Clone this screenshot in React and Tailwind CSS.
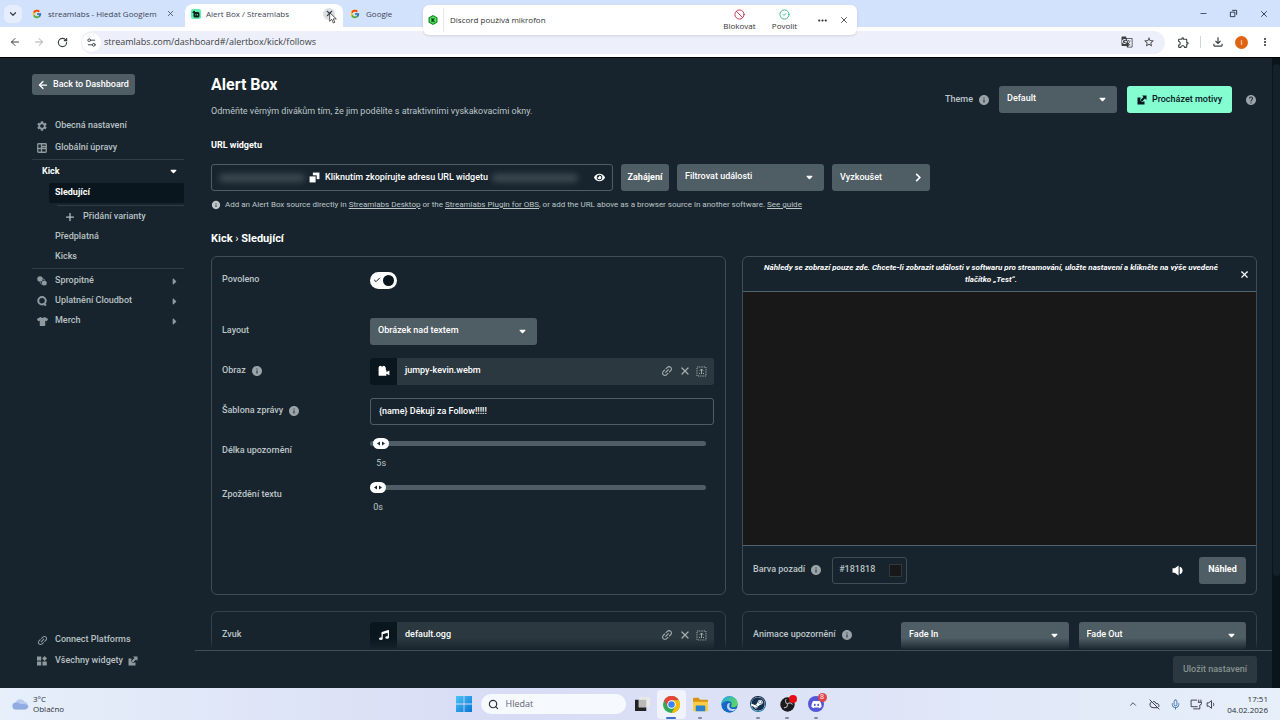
import React, { useState } from "react";
import { ArrowLeft, ArrowRight, RotateCw, Settings2, X, ChevronDown, ChevronUp, Check, Plus, Ban, CircleCheck, Search, Minus, Mic, CloudOff } from "lucide-react";
import { FcGoogle } from "react-icons/fc";
import { FaSteam, FaDiscord, FaTshirt, FaMusic, FaEye } from "react-icons/fa";
import { MdInfo, MdHelp, MdSettings, MdLink, MdGTranslate, MdStarBorder, MdOutlineExtension, MdOutlineFileDownload, MdMoreVert, MdMoreHoriz } from "react-icons/md";

/* ---------- icons ---------- */

const CaretDown = ({ className = "" }) => (
  <svg viewBox="0 0 8 6" className={`h-[5px] w-[7px] shrink-0 ${className}`} fill="currentColor">
    <path d="M1.2.8h5.6c.7 0 1 .8.5 1.2L4.7 4.8a1 1 0 0 1-1.4 0L.7 2C.2 1.600.5.8 1.200.8z" />
  </svg>
);

const CaretRight = () => (
  <svg viewBox="0 0 6 8" className="h-[7px] w-[5px] shrink-0" fill="currentColor">
    <path d="M.8 1.200v5.600c0 .7.8 1 1.200.5L4.800 4.700a1 1 0 0 0 0-1.400L2 .7C1.600.2.8.5.8 1.200z" />
  </svg>
);

const External = ({ className = "" }) => (
  <svg viewBox="0 0 20 20" className={`size-[10px] shrink-0 ${className}`} fill="currentColor">
    <path d="M1 5h6v3.500L5.500 10l4.500 4.500 1.500-1.500H15v6H1z" />
    <path d="M10 1h9v9l-3-3-6.500 6.500-3-3L13 4z" />
  </svg>
);

const Grid = () => (
  <svg viewBox="0 0 20 20" className="size-[10px]" fill="none" stroke="currentColor" strokeWidth="2.600">
    <rect x="1.500" y="1.500" width="17" height="17" rx="1.500" />
    <path d="M9 1.500v17M1.500 11h17M9 7h9" />
  </svg>
);

const Coins = () => (
  <svg viewBox="0 0 20 20" className="size-[10px]" fill="currentColor">
    <circle cx="6" cy="6" r="5.500" />
    <circle cx="14.500" cy="14" r="5" />
    <path d="M6 12l3 5M11 5l5 3" stroke="currentColor" strokeWidth="1.500" />
  </svg>
);

const Bot = () => (
  <svg viewBox="0 0 20 20" className="size-[10px]" fill="none" stroke="currentColor" strokeWidth="4">
    <circle cx="10" cy="9.500" r="7.500" />
    <path d="M12 15l6 4" />
  </svg>
);

const Widgets = () => (
  <svg viewBox="0 0 20 20" className="size-[10px]" fill="currentColor">
    <path d="M0 1h8.500v8H0zM0 11h8.500v8H0zM11 11h8.500v8H11z" />
    <path d="M15.200 0l2.400 2.400L20 5l-2.400 2.500L15.200 10l-2.500-2.500L10.500 5l2.200-2.600z" />
  </svg>
);

const Camera = () => (
  <svg viewBox="0 0 20 20" className="size-3" fill="currentColor">
    <circle cx="4" cy="4" r="2.800" />
    <circle cx="9.500" cy="4" r="2.800" />
    <path d="M1 8h12c.6 0 1 .4 1 1v2.500l5-2.500v8l-5-2.500V17c0 .6-.4 1-1 1H2c-.6 0-1-.4-1-1z" />
    <path d="M1 4h12v5H1z" />
  </svg>
);

const Copy = () => (
  <svg viewBox="0 0 20 20" className="size-[11px]">
    <path d="M7 1h12v12H7z" fill="#fff" />
    <path d="M0 6h14v14H0z" fill="#17242d" />
    <path d="M1 8h11v11H1z" fill="#fff" />
  </svg>
);

const Capture = () => (
  <svg viewBox="0 0 22 22" className="size-[11px]" fill="none" stroke="currentColor" strokeWidth="2">
    <rect x="2" y="2" width="18" height="18" strokeDasharray="2.500 2" />
    <path d="M11 6v10M7.500 9.500L11 6l3.500 3.500" />
    <path d="M7 14v2M15 14v2" />
  </svg>
);

const Speaker = () => (
  <svg viewBox="0 0 20 20" className="size-[11px]" fill="currentColor">
    <path d="M1 6h4l7-5v18l-7-5H1z" />
    <path d="M14 3c7 2 7 12 0 14z" />
  </svg>
);

const StreamlabsLogo = () => (
  <svg viewBox="0 0 20 20" className="size-[10px] shrink-0">
    <rect width="20" height="20" rx="4" fill="#5ff0b2" />
    <path d="M3 8c0-3 2-4.500 5-4.500V6h6a3 3 0 0 1 3 3v5a3 3 0 0 1-3 3H8a3 3 0 0 1-3-3V8z" fill="#10231f" />
    <path d="M9.500 10v3M13 10v3" stroke="#5ff0b2" strokeWidth="1.600" />
  </svg>
);

const HexLogo = () => (
  <svg viewBox="0 0 20 20" className="size-[10px]">
    <path d="M10 0l9 5v10l-9 5-9-5V5z" fill="#128a24" />
    <path d="M10 2.500l6.500 3.700v7.600L10 17.500l-6.500-3.700V6.200z" fill="#5bea63" />
    <path d="M8 5.500v9M13 7l-4 3 4 4" stroke="#083c10" strokeWidth="2.200" fill="none" />
  </svg>
);

const ChromeLogo = () => (
  <svg viewBox="0 0 24 24" className="size-[17px]">
    <circle cx="12" cy="12" r="12" fill="#34a853" />
    <path d="M12 0a12 12 0 0 1 10.400 6H12L6.800 15 1.600 6A12 12 0 0 1 12 0z" fill="#ea4335" />
    <path d="M22.400 6A12 12 0 0 1 12 24l5.200-9L12 6z" fill="#fbbc05" />
    <circle cx="12" cy="12" r="6" fill="#fff" />
    <circle cx="12" cy="12" r="4.600" fill="#3b82f6" />
  </svg>
);

const EdgeLogo = () => (
  <svg viewBox="0 0 24 24" className="size-[17px]">
    <defs>
      <linearGradient id="edgeTop" x1="0" x2="1" y1="0" y2="0.600">
        <stop offset="0" stopColor="#1fa7e8" />
        <stop offset="1" stopColor="#5fd85f" />
      </linearGradient>
    </defs>
    <circle cx="12" cy="12" r="11.500" fill="#1668c4" />
    <path d="M.5 12C.5 5 6 .5 12 .5S23.500 5 23.500 10c0 4-3 6-6 6-2.500 0-4-1-3-2.500 2-4-1-6.500-5-6.500S2 9 .5 12z" fill="url(#edgeTop)" />
    <path d="M9 12c-2 5 2 10 8 9 2.500-.5 4-2 5-3.500-4 2-10 1-10.500-3.500 0-1.500 1-2.500 2-3-1.500-1-3.800-.8-4.500 1z" fill="#dcebfb" opacity=".85" />
  </svg>
);

const FolderLogo = () => (
  <svg viewBox="0 0 24 22" className="h-[15px] w-[17px]">
    <path d="M1 2.500C1 1.500 1.700 1 2.500 1H9l2.500 3h10c.8 0 1.500.6 1.500 1.500V10H1z" fill="#d9930f" />
    <path d="M1 7h22v12.500c0 .8-.7 1.500-1.500 1.500h-19C1.700 21 1 20.300 1 19.500z" fill="#fccb46" />
    <path d="M5 14c0-1 .7-1.500 1.500-1.500h11c.8 0 1.500.5 1.500 1.500v7H5z" fill="#2583cf" />
  </svg>
);

const ObsLogo = () => (
  <svg viewBox="0 0 24 24" className="size-[15px]">
    <circle cx="12" cy="12" r="11.500" fill="#1b1b1d" />
    <g fill="none" stroke="#a9a9ad" strokeWidth="1.800" strokeLinecap="round">
      <path d="M12 11C9 10 8 7 9.500 4" />
      <path d="M12 11c2-2.500 5-3 7.500-.5" transform="rotate(8 12 12)" />
      <path d="M12 11c.5 3.500-1.500 6-5 6" />
    </g>
  </svg>
);

const WindowsLogo = () => (
  <svg viewBox="0 0 16 16" className="size-4">
    <defs>
      <linearGradient id="win" x1="0" x2="1" y1="0" y2="1">
        <stop offset="0" stopColor="#4cc4f5" />
        <stop offset="1" stopColor="#0a74d4" />
      </linearGradient>
    </defs>
    <path d="M0 0h7.600v7.600H0zM8.400 0H16v7.600H8.400zM0 8.400h7.600V16H0zM8.400 8.400H16V16H8.400z" fill="url(#win)" />
  </svg>
);

const Cloud = () => (
  <svg viewBox="0 0 34 24" className="h-3 w-[17px]">
    <path d="M8 23a7 7 0 0 1-.5-14A9.500 9.500 0 0 1 25 7.500 8 8 0 0 1 26 23z" fill="#b6cbee" />
    <path d="M8 23a7 7 0 0 1-1-13.900c6-1 9 4 14 3 5-.8 9 1 12 4A8 8 0 0 1 26 23z" fill="#8fabdf" />
  </svg>
);

/* ---------- controls ---------- */

const Info = () => <MdInfo className="size-3 shrink-0 text-[#9aa3a7]" />;

function Select({ label, value, options = [], className = "" }) {
  return (
    <span className={`relative flex h-[27px] items-center ${className}`}>
      <select
        aria-label={label}
        defaultValue={value}
        className="size-full appearance-none rounded-[3px] bg-[#4f5e65] pr-6 pb-px pl-2 font-medium text-white"
      >
        {[value, ...options].map((o) => (
          <option key={o}>{o}</option>
        ))}
      </select>
      <CaretDown className="pointer-events-none absolute right-[11px] text-white" />
    </span>
  );
}

function Row({ label, htmlFor, info, children }) {
  return (
    <div className="flex h-10 items-center">
      <div className="flex w-[148px] shrink-0 items-center gap-[5px]">
        <label htmlFor={htmlFor} className="font-medium">{label}</label>
        {info && <Info />}
      </div>
      {children}
    </div>
  );
}

function FileField({ icon, name }) {
  return (
    <div className="flex h-[27px] flex-1 items-center overflow-hidden rounded-[3px] bg-[#2b383f]">
      <span className="flex h-full w-[27px] items-center justify-center bg-[#09161d] text-white">{icon}</span>
      <span className="flex-1 pl-2 font-medium text-white">{name}</span>
      <span className="flex items-center gap-[5px] pr-[7px] text-[#a3acb0]">
        <button aria-label="Odkaz"><MdLink className="size-[14px] -rotate-45" /></button>
        <button aria-label="Odebrat"><X className="size-3" strokeWidth={2.500} /></button>
        <button aria-label="Vybrat"><Capture /></button>
      </span>
    </div>
  );
}

function RangeField({ id, min, max, initial }) {
  const [value, setValue] = useState(initial);
  const ratio = (value - min) / (max - min);
  const left = `calc((100% - 16px) * ${ratio})`;
  return (
    <div className="flex-1 pr-2">
      <div className="relative flex h-5 items-center">
        <input
          id={id}
          type="range"
          min={min}
          max={max}
          value={value}
          onChange={(e) => setValue(Number(e.target.value))}
          className="h-[5px] w-full appearance-none rounded-full bg-[#4f5e65] [&::-webkit-slider-thumb]:h-[11px] [&::-webkit-slider-thumb]:w-4 [&::-webkit-slider-thumb]:appearance-none [&::-webkit-slider-thumb]:rounded-full [&::-webkit-slider-thumb]:bg-white"
        />
        <svg viewBox="0 0 16 11" className="pointer-events-none absolute h-[11px] w-4" style={{ left }} fill="#17242d">
          <path d="M7 3.500v4L4 5.500zM9 3.500v4l3-2z" />
        </svg>
      </div>
      <div className="relative h-4 leading-5">
        <span className="absolute flex w-4 justify-center" style={{ left }}>{value}s</span>
      </div>
    </div>
  );
}

/* ---------- browser frame ---------- */

function TabStrip() {
  return (
    <div className="flex h-[27px] items-center bg-[#d3e2fc] text-[8px] text-[#3c4454]">
      <button aria-label="Hledat karty" className="ml-1 flex size-[18px] items-center justify-center rounded-md bg-[#e6eefd]">
        <ChevronDown className="size-2.5" strokeWidth={3} />
      </button>
      <div className="ml-[10px] flex w-[153px] items-center">
        <FcGoogle className="size-[10px] shrink-0" />
        <span className="ml-1.5 flex-1 whitespace-nowrap">streamlabs - Hledat Googlem</span>
        <button aria-label="Zavřít kartu" className="mr-[10px]"><X className="size-[9px]" /></button>
      </div>
      <div className="flex h-[23px] w-[158px] items-center self-end rounded-t-lg bg-white pr-2 pb-1 pl-[6px]">
        <StreamlabsLogo />
        <span className="ml-[5px] flex-1 whitespace-nowrap">Alert Box / Streamlabs</span>
        <button aria-label="Zavřít kartu" className="relative flex size-3 items-center justify-center rounded-full bg-[#dcdfe3]">
          <X className="size-[9px]" strokeWidth={3} />
          <svg viewBox="0 0 12 18" className="pointer-events-none absolute top-1 left-1.5 h-3 w-2">
            <path d="M1 1v13l3.200-3 2.300 5.500 2.200-1L6.500 10.300H11z" fill="#fff" stroke="#111" />
          </svg>
        </button>
      </div>
      <div className="flex items-center gap-1.5 pl-[7px]">
        <FcGoogle className="size-[10px]" />
        <span>Google</span>
      </div>
      <div className="ml-auto flex items-center gap-[21px] pr-[11px] text-[#1f2937]">
        <button aria-label="Minimalizovat"><Minus className="size-[9px]" /></button>
        <button aria-label="Obnovit">
          <svg viewBox="0 0 10 10" className="size-[9px]" fill="none" stroke="currentColor"><path d="M1.500 3.500h5v5h-5zM3.500 1.500h5v5" /></svg>
        </button>
        <button aria-label="Zavřít"><X className="size-[10px]" /></button>
      </div>
    </div>
  );
}

function Toolbar() {
  return (
    <div className="flex h-[31px] items-center border-b border-black bg-white text-[#3c4043]">
      <button aria-label="Zpět" className="ml-[9px]"><ArrowLeft className="size-3" /></button>
      <button aria-label="Vpřed" className="ml-3 text-[#a8abaf]"><ArrowRight className="size-3" /></button>
      <button aria-label="Načíst znovu" className="ml-3"><RotateCw className="size-[11px]" strokeWidth={2.500} /></button>
      <div className="ml-[13px] flex h-[23px] flex-1 items-center rounded-full bg-[#edf0fa]">
        <span className="ml-px flex size-[19px] items-center justify-center rounded-full bg-white"><Settings2 className="size-[11px]" /></span>
        <input aria-label="Adresa" defaultValue="streamlabs.com/dashboard#/alertbox/kick/follows" className="ml-[3px] flex-1 bg-transparent text-[9px] outline-none" />
        <MdGTranslate className="size-3" />
        <MdStarBorder className="mx-[10px] size-3" />
      </div>
      <MdOutlineExtension className="ml-3 size-[13px]" />
      <span className="ml-2.5 h-3 w-px bg-[#d0d5df]" />
      <MdOutlineFileDownload className="ml-2.5 size-[14px]" />
      <span className="ml-[10px] flex size-[13px] items-center justify-center rounded-full bg-[#e0640f] text-[8px] text-white">i</span>
      <MdMoreVert className="mr-[9px] ml-[11px] size-3" />
    </div>
  );
}

function MicNotice() {
  return (
    <div className="absolute top-[5px] left-[423px] flex h-[30px] w-[434px] items-center rounded-md bg-white text-[8px] text-[#333] shadow-sm">
      <span className="flex h-6 w-[21px] items-center justify-center border-r border-[#e8e8e8]"><HexLogo /></span>
      <span className="ml-1.5 flex-1">Discord používá mikrofon</span>
      <button className="flex w-[45px] flex-col items-center leading-[11px]"><Ban className="size-[11px] text-[#c2304b]" />Blokovat</button>
      <button className="flex w-[45px] flex-col items-center leading-[11px]"><CircleCheck className="size-[11px] text-[#35b58a]" />Povolit</button>
      <button aria-label="Další" className="ml-[9px]"><MdMoreHoriz className="size-[13px]" /></button>
      <button aria-label="Zavřít" className="mr-2 ml-[10px]"><X className="size-[10px]" /></button>
    </div>
  );
}

/* ---------- sidebar ---------- */

function NavItem({ icon, children, arrow, className = "h-5" }) {
  return (
    <a href="#" className={`flex items-center ${className}`}>
      <span className="ml-1 flex w-[19px] shrink-0 text-[#8f999e]">
        <span className="flex size-3 items-center justify-center">{icon}</span>
      </span>
      <span className="flex flex-1 items-center gap-[5px]">{children}</span>
      {arrow && <span className="mr-[7px] text-[#8f999e]"><CaretRight /></span>}
    </a>
  );
}

function Sidebar() {
  return (
    <nav className="flex w-[195px] shrink-0 flex-col pt-4 pr-[11px] pb-[17px] pl-8 font-medium text-[#b9c1c4]">
      <button className="flex h-[21px] items-center gap-1 self-start rounded-[3px] bg-[#4f5e65] pr-1.5 pl-[5px] text-white">
        <ArrowLeft className="size-3" strokeWidth={2.500} />
        Back to Dashboard
      </button>
      <div className="mt-5 border-b border-[#2f3d45]">
        <NavItem className="h-[22px]" icon={<MdSettings className="size-3 shrink-0" />}>Obecná nastavení</NavItem>
        <NavItem className="h-[22px]" icon={<Grid />}>Globální úpravy</NavItem>
      </div>
      <div className="border-b border-[#2f3d45] pb-px">
        <button className="flex h-[23px] w-full items-center justify-between pr-[7px] pl-[10px] font-bold text-white">
          Kick
          <CaretDown />
        </button>
        <a href="#" className="ml-[17px] flex h-5 items-center rounded-[2px] bg-[#09161d] pl-1.5 font-bold text-white">Sledující</a>
        <a href="#" className="mt-0.5 ml-[25px] flex h-[22px] items-center gap-[7px] border-t border-[#2f3d45] pl-[7px]">
          <Plus className="size-3" strokeWidth={2.500} />
          Přidání varianty
        </a>
        <a href="#" className="ml-[23px] flex h-5 items-center">Předplatná</a>
        <a href="#" className="ml-[23px] flex h-5 items-center">Kicks</a>
      </div>
      <div className="mt-0.5">
        <NavItem icon={<Coins />} arrow>Spropitné</NavItem>
        <NavItem icon={<Bot />} arrow>Uplatnění Cloudbot</NavItem>
        <NavItem icon={<FaTshirt className="size-[11px]" />} arrow>Merch</NavItem>
      </div>
      <div className="mt-auto flex flex-col gap-px">
        <NavItem icon={<MdLink className="size-[13px] shrink-0 -rotate-45" />}>Connect Platforms</NavItem>
        <NavItem icon={<Widgets />}>Všechny widgety <External className="text-[#8f999e]" /></NavItem>
      </div>
    </nav>
  );
}

/* ---------- main area ---------- */

function PageHeader() {
  return (
    <header className="flex justify-between">
      <div>
        <h1 className="text-[16px] leading-5 font-bold text-white">Alert Box</h1>
        <p className="mt-2 leading-4">Odměňte věrným divákům tím, že jim podělíte s atraktivními vyskakovacími okny.</p>
      </div>
      <div className="mt-[11px] flex h-[27px] items-center">
        <span className="mr-[5px] font-medium">Theme</span>
        <Info />
        <Select label="Theme" value="Default" className="mr-[10px] ml-[9px] w-[118px]" />
        <button className="flex h-full w-[105px] items-center justify-center gap-[5px] rounded-[3px] bg-[#84fdd0] font-medium text-[#09161d]">
          <External />
          Procházet motivy
        </button>
        <button aria-label="Nápověda" className="ml-[13px]"><MdHelp className="size-3 text-[#9aa3a7]" /></button>
      </div>
    </header>
  );
}

function UrlBar() {
  return (
    <section>
      <h2 className="mt-[18px] leading-4 font-bold text-white">URL widgetu</h2>
      <div className="mt-[11px] flex gap-2 text-white">
        <div className="flex h-[27px] w-[402px] items-center rounded-[3px] border border-[#4f5e65] px-[7px]">
          <span className="h-2 flex-1 rounded bg-[#56646b] opacity-60 blur-[3px]" />
          <button className="flex items-center gap-[5px] px-1 font-medium"><Copy />Kliknutím zkopírujte adresu URL widgetu</button>
          <span className="h-2 flex-1 rounded bg-[#56646b] opacity-60 blur-[3px]" />
          <button aria-label="Zobrazit" className="ml-4"><FaEye className="size-[11px]" /></button>
        </div>
        <button className="h-[27px] w-12 rounded-[3px] bg-[#4f5e65] font-bold">Zahájení</button>
        <Select label="Filtrovat události" value="Filtrovat události" className="w-[147px]" />
        <button className="flex h-[27px] w-[98px] items-center justify-between rounded-[3px] bg-[#4f5e65] pr-[9px] pl-2 font-medium">
          Vyzkoušet
          <svg viewBox="0 0 6 10" className="h-[9px] w-[6px]" fill="none" stroke="currentColor" strokeWidth="1.800"><path d="M1 1l4 4-4 4" /></svg>
        </button>
      </div>
      <p className="mt-1.5 flex items-center gap-1 text-[8px] leading-4">
        <MdInfo className="size-[10px]" />
        <span>
          Add an Alert Box source directly in <a href="#" className="underline">Streamlabs Desktop</a> or the{" "}
          <a href="#" className="underline">Streamlabs Plugin for OBS</a>, or add the URL above as a browser source in another software.{" "}
          <a href="#" className="underline">See guide</a>
        </span>
      </p>
    </section>
  );
}

function SettingsPanel() {
  return (
    <section className="flex min-h-[339px] flex-col rounded-md border border-[#3f4d55] pt-[3px] pr-[11px] pl-[10px]">
      <Row label="Povoleno" htmlFor="enabled">
        <span className="relative flex h-[17px] w-[27px]">
          <input id="enabled" type="checkbox" defaultChecked className="peer size-full appearance-none rounded-full bg-[#4f5e65] checked:bg-white" />
          <span className="pointer-events-none absolute inset-0 hidden items-center justify-between px-[3px] text-[#09161d] peer-checked:flex">
            <Check className="size-2" strokeWidth={3} />
            <span className="size-[11px] rounded-full bg-[#09161d]" />
          </span>
        </span>
      </Row>
      <div className="mt-[11px]">
        <Row label="Layout">
          <Select label="Layout" value="Obrázek nad textem" className="w-[167px]" />
        </Row>
        <Row label="Obraz" info>
          <FileField icon={<Camera />} name="jumpy-kevin.webm" />
        </Row>
        <Row label="Šablona zprávy" htmlFor="template" info>
          <input id="template" defaultValue="{name} Děkuji za Follow!!!!!" className="h-[27px] flex-1 rounded-[3px] border border-[#4f5e65] bg-transparent px-2 font-medium text-white" />
        </Row>
        <div className="flex flex-col gap-1">
          <Row label="Délka upozornění" htmlFor="duration">
            <RangeField id="duration" min={2} max={300} initial={5} />
          </Row>
          <Row label="Zpoždění textu" htmlFor="delay">
            <RangeField id="delay" min={0} max={60} initial={0} />
          </Row>
        </div>
      </div>
    </section>
  );
}

function PreviewPanel() {
  return (
    <section className="flex flex-col rounded-md border border-[#3f4d55]">
      <div className="flex h-[35px] items-center border-b border-[#4f6470] text-white">
        <p className="flex-1 pl-4 text-center text-[8px] leading-3 font-bold italic">
          Náhledy se zobrazí pouze zde. Chcete-li zobrazit události v softwaru pro streamování, uložte nastavení a klikněte na výše uvedené tlačítko „Test“.
        </p>
        <button aria-label="Zavřít" className="mr-[6px] ml-4"><X className="size-[11px]" strokeWidth={2.500} /></button>
      </div>
      <div className="flex-1 bg-[#181818]" />
      <div className="flex h-[49px] items-center border-t border-[#4f6470] px-[10px]">
        <label htmlFor="bg" className="mr-[5px] font-medium">Barva pozadí</label>
        <Info />
        <span className="ml-[10px] flex h-[27px] w-[75px] items-center rounded-[3px] border border-[#3f4d55] pr-1 pl-[6px]">
          <input id="bg" defaultValue="#181818" className="w-0 flex-1 bg-transparent font-medium text-[#b9c1c4]" />
          <span className="size-[13px] border border-[#33383b] bg-[#181818]" />
        </span>
        <button aria-label="Zvuk" className="mr-4 ml-auto text-white"><Speaker /></button>
        <button className="h-[27px] w-[47px] rounded-[3px] bg-[#4f5e65] font-bold text-white">Náhled</button>
      </div>
    </section>
  );
}

function Main() {
  return (
    <main className="flex min-w-0 flex-1 flex-col">
      <div className="relative min-h-0 flex-1 overflow-hidden pt-[17px] pr-[15px] pl-4">
        <PageHeader />
        <UrlBar />
        <h3 className="mt-[18px] text-[11px] leading-4 font-bold text-white">
          Kick <span className="font-normal">›</span> Sledující
        </h3>
        <div className="mt-[9px] grid grid-cols-2 gap-4">
          <SettingsPanel />
          <PreviewPanel />
          <section className="rounded-md border border-[#33424a] pt-[3px] pr-[11px] pb-4 pl-[10px]">
            <Row label="Zvuk">
              <FileField icon={<FaMusic className="size-[10px]" />} name="default.ogg" />
            </Row>
          </section>
          <section className="rounded-md border border-[#33424a] px-[10px] pt-[3px] pb-4">
            <Row label="Animace upozornění" info>
              <div className="flex flex-1 gap-[10px]">
                <Select label="Animace na začátku" value="Fade In" className="flex-1" />
                <Select label="Animace na konci" value="Fade Out" className="flex-1" />
              </div>
            </Row>
          </section>
        </div>
        <div className="pointer-events-none absolute inset-x-0 bottom-0 h-3 bg-linear-to-t from-[#17242d] to-transparent" />
      </div>
      <footer className="flex h-[38px] shrink-0 items-center justify-end border-t border-[#3f4f58] pr-[15px]">
        <button disabled className="h-[27px] w-[84px] rounded-[3px] bg-[#2b383f] font-medium text-[#87918f]">Uložit nastavení</button>
      </footer>
    </main>
  );
}

/* ---------- taskbar ---------- */

function AppIcon({ label, open, active, badge, children }) {
  return (
    <button aria-label={label} className={`relative flex size-[29px] items-center justify-center rounded ${active ? "bg-white/60" : ""}`}>
      {children}
      {badge}
      {open && <span className={`absolute bottom-0 h-0.5 rounded-full ${active ? "w-[10px] bg-[#3b6fc9]" : "w-1 bg-[#868b98]"}`} />}
    </button>
  );
}

function Taskbar() {
  return (
    <div className="grid h-8 grid-cols-[1fr_auto_1fr] items-center bg-linear-to-r from-[#e6effa] via-[#d8dcf5] via-40% to-[#e6effa] font-['Open_Sans',sans-serif] text-[8px] text-[#2c3038]">
      <div className="flex items-center gap-1 pl-3">
        <Cloud />
        <span className="leading-[10px]">3°C<br />Oblačno</span>
      </div>
      <div className="flex items-center">
        <AppIcon label="Start"><WindowsLogo /></AppIcon>
        <label className="mx-0.5 flex h-5 w-[145px] items-center gap-[7px] rounded-full bg-[#f6f9fe] px-[7px]">
          <Search className="size-[11px]" strokeWidth={2.500} />
          <input placeholder="Hledat" aria-label="Hledat" className="w-0 flex-1 bg-transparent text-[9px] outline-none placeholder:text-[#5d6470]" />
        </label>
        <AppIcon label="Zobrazení úloh">
          <svg viewBox="0 0 16 16" className="size-[15px]"><path d="M5 0h11v11H5z" fill="#e9e9e9" /><path d="M0 3h4v8h8v4H0z" fill="#222" /><path d="M4 3h8v8H4z" fill="#b9b9b5" /></svg>
        </AppIcon>
        <AppIcon label="Chrome" open active><ChromeLogo /></AppIcon>
        <AppIcon label="Průzkumník" open><FolderLogo /></AppIcon>
        <AppIcon label="Edge"><EdgeLogo /></AppIcon>
        <AppIcon label="Steam" open>
          <span className="rounded-full bg-linear-to-b from-[#0d1b3b] to-[#1c7fae] p-px"><FaSteam className="size-[14px] rounded-full bg-white text-[#12304f]" /></span>
        </AppIcon>
        <AppIcon label="OBS" open badge={<span className="absolute top-[5px] right-[5px] size-2 rounded-full bg-[#e80c16]" />}>
          <ObsLogo />
        </AppIcon>
        <AppIcon label="Discord" open badge={<span className="absolute top-[3px] right-1 flex size-[9px] items-center justify-center rounded-full bg-[#e0434b] text-[7px] text-white">8</span>}>
          <span className="flex size-4 items-center justify-center rounded-full bg-[#5457d6]"><FaDiscord className="size-[11px] text-white" /></span>
        </AppIcon>
      </div>
      <div className="flex items-center justify-end pr-3">
        <ChevronUp className="size-[10px]" />
        <CloudOff className="ml-[11px] size-[11px]" />
        <Mic className="ml-[10px] size-[11px] text-[#3c6fae]" />
        <svg viewBox="0 0 22 20" className="ml-[9px] h-[11px] w-3" fill="none" stroke="currentColor" strokeWidth="1.600"><path d="M13 2H2v12h12M6 18h8M16 1v5M20 1v5M14.500 6h7v3l-3.500 2v7h-4" /></svg>
        <svg viewBox="0 0 20 20" className="ml-1 size-[11px]" fill="none" stroke="currentColor" strokeWidth="1.600"><path d="M2 7h3l5-4v14l-5-4H2zM13 7c1.500 2 1.500 4 0 6" /></svg>
        <span className="ml-[10px] text-right leading-[11px]">17:51<br />04.02.2026</span>
      </div>
    </div>
  );
}

export default function App() {
  return (
    <div className="relative flex h-screen flex-col overflow-hidden bg-[#17242d]">
      <div className="font-['Open_Sans',sans-serif]">
        <TabStrip />
        <Toolbar />
        <MicNotice />
      </div>
      <div className="flex min-h-0 flex-1 font-['Roboto',sans-serif] text-[9px] text-[#bdc5c8]">
        <Sidebar />
        <Main />
        <div className="flex w-2 shrink-0 flex-col bg-[#0a151b] pt-1.5 pb-28 pl-px">
          <div className="flex-1 rounded-full bg-[#14212a]" />
        </div>
      </div>
      <Taskbar />
    </div>
  );
}
